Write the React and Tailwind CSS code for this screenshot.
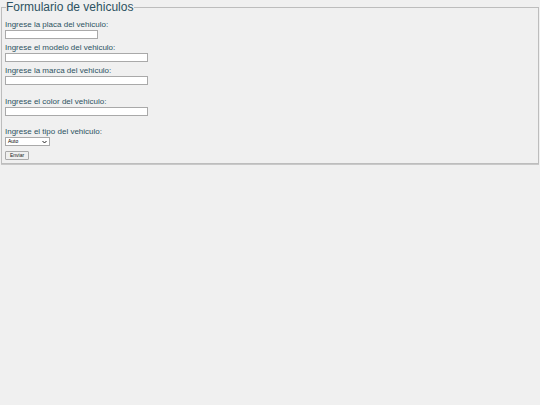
export default function App() {
  const label = "block text-[8px] leading-[9px] text-[#2d5261]"
  const field = "block mt-px h-[9px] bg-white border border-[#a9a9a9]"

  return (
    <div className="min-h-screen w-full bg-[#f0f0f0] font-['Liberation_Sans',Arial,sans-serif]">
      <form className="pl-px pr-[1px] pt-0">
        <fieldset className="border border-[#bdbdbd] pb-[3px] pl-[3px] pr-2 shadow-[0_1px_0_#c8c8c8]">
          <legend className="ml-[1px] pr-[1px] text-[12px] leading-[14px] text-[#2d5261]">
            Formulario de vehiculos
          </legend>

          <div className="mt-[6px]">
            <label className={label}>Ingrese la placa del vehiculo:</label>
            <input type="text" className={`${field} w-[93px]`} />
          </div>

          <div className="mt-[4px]">
            <label className={label}>Ingrese el modelo del vehiculo:</label>
            <input type="text" className={`${field} w-[143px]`} />
          </div>

          <div className="mt-[4px]">
            <label className={label}>Ingrese la marca del vehiculo:</label>
            <input type="text" className={`${field} w-[143px]`} />
          </div>

          <div className="mt-[12px]">
            <label className={label}>Ingrese el color del vehiculo:</label>
            <input type="text" className={`${field} w-[143px]`} />
          </div>

          <div className="mt-[11px]">
            <label className={label}>Ingrese el tipo del vehiculo:</label>
            <div className="mt-px flex h-[9px] w-[45px] items-center justify-between bg-white border border-[#a9a9a9] px-[2px]">
              <span className="text-[5px] leading-[5px] text-black">Auto</span>
              <svg width="5" height="4" viewBox="0 0 5 4">
                <path d="M0.5 1 L2.5 3 L4.5 1" fill="none" stroke="#222" strokeWidth="1" />
              </svg>
            </div>
          </div>

          <button
            type="button"
            className="mt-[5px] block h-[9px] w-[24px] rounded-[1px] border border-[#a9a9a9] bg-[#efefef] text-[5px] leading-[7px] text-[#222]"
          >
            Enviar
          </button>
        </fieldset>
      </form>
    </div>
  )
}
